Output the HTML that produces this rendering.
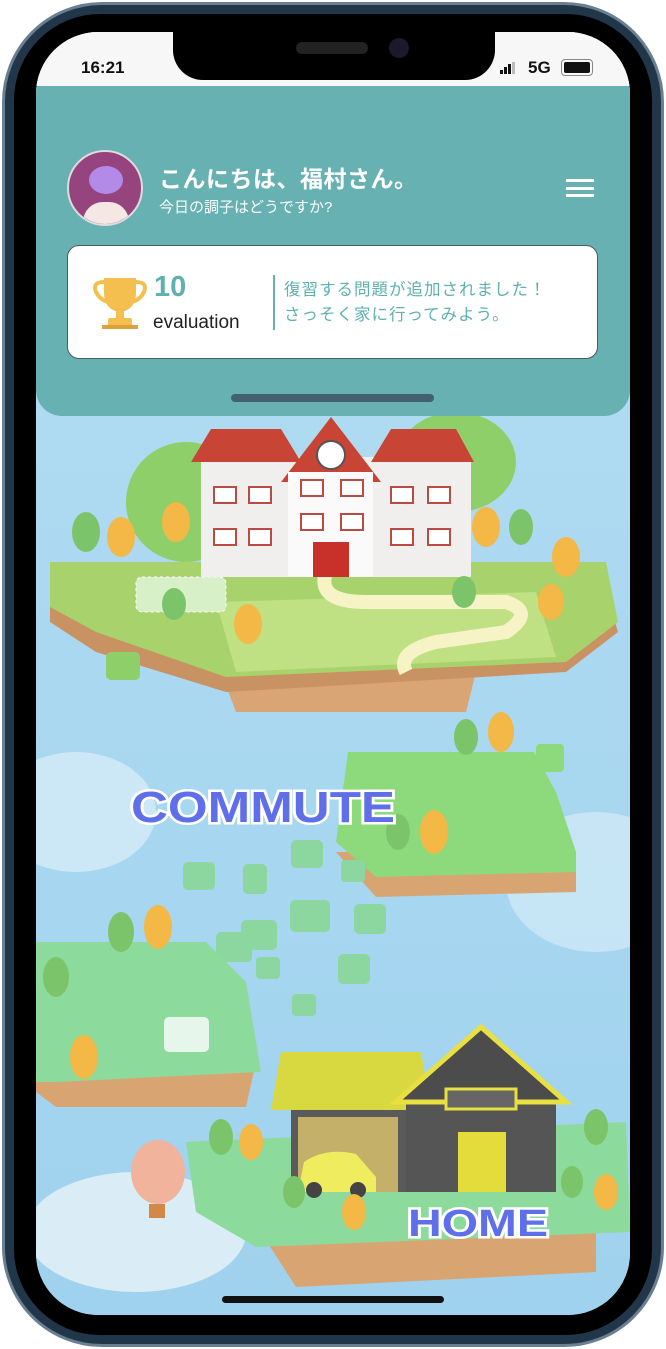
<!DOCTYPE html>
<html><head><meta charset="utf-8"><style>
*{margin:0;padding:0;box-sizing:border-box}
body{width:666px;height:1349px;background:#fff;overflow:hidden;position:relative;font-family:"Liberation Sans","Noto Sans CJK JP",sans-serif}
.frame{position:absolute;left:2px;top:2px;width:662px;height:1345px;border-radius:100px;background:#22364a;border:3px solid #6a7f92}
.bezel{position:absolute;left:14px;top:14px;width:638px;height:1321px;border-radius:86px;background:#000}
.screen{position:absolute;left:36px;top:32px;width:594px;height:1283px;border-radius:62px;overflow:hidden;background:#a9d8f0}
.status{position:absolute;left:0;top:0;width:594px;height:54px;background:#f7f7f7}
.notch{position:absolute;left:137px;top:-2px;width:322px;height:50px;background:#000;border-radius:0 0 30px 30px}
.hdr{position:absolute;left:0;top:54px;width:594px;height:330px;background:#67b1b3;border-radius:0 0 26px 26px}
.card{position:absolute;left:31px;top:159px;width:531px;height:114px;background:#fff;border:1.5px solid #4a5a66;border-radius:12px}
</style></head><body>
<div class="frame"></div>
<div class="bezel"></div>
<div class="screen">
<svg width="594" height="1283" style="position:absolute;left:0;top:0">
<defs><linearGradient id="sky" x1="0" y1="0" x2="0" y2="1"><stop offset="0" stop-color="#b5def3"/><stop offset="1" stop-color="#9fd2ee"/></linearGradient></defs>
<rect width="594" height="1283" fill="url(#sky)"/>
<ellipse cx="40" cy="780" rx="80" ry="60" fill="#dceff8" opacity=".7"/>
<ellipse cx="560" cy="850" rx="90" ry="70" fill="#dceff8" opacity=".6"/>
<ellipse cx="100" cy="1200" rx="110" ry="60" fill="#e9f4f8" opacity=".8"/>
<ellipse cx="150" cy="470" rx="60" ry="60" fill="#8fcf6a"/>
<ellipse cx="420" cy="430" rx="60" ry="50" fill="#8fcf6a"/>
<path d="M185 640 L440 640 L430 680 L200 680 Z" fill="#d9a574"/>
<path d="M14 560 L570 560 L582 600 L530 640 L190 660 L60 620 L14 590 Z" fill="#c99262"/>
<path d="M14 530 L570 530 L582 590 L530 630 L190 645 L60 600 L14 575 Z" fill="#a8d26c"/>
<path d="M180 570 L500 560 L520 625 L200 640 Z" fill="#bfe083"/>
<path d="M290 540 Q280 570 330 570 L470 570 Q500 580 470 600 L400 610 Q360 620 370 640" stroke="#f6f3c6" stroke-width="14" fill="none"/>
<rect x="100" y="545" width="90" height="35" rx="6" fill="#d8f0c8" stroke="#fff" stroke-dasharray="3 3"/>
<rect x="70" y="620" width="34" height="28" rx="5" fill="#8fcf6a"/>
<rect x="165" y="425" width="270" height="120" fill="#f1efee"/>
<polygon points="155,430 175,397 245,397 265,430" fill="#c84434"/>
<polygon points="335,430 355,397 420,397 438,430" fill="#c84434"/>
<polygon points="245,450 295,385 345,450" fill="#c84434"/>
<rect x="252" y="440" width="85" height="105" fill="#fafafa"/>
<circle cx="295" cy="423" r="14" fill="#fff" stroke="#555" stroke-width="2"/>
<rect x="277" y="510" width="36" height="35" fill="#c8312a"/>
<g fill="#fff" stroke="#b94b43" stroke-width="2">
<rect x="178" y="455" width="22" height="16"/><rect x="213" y="455" width="22" height="16"/><rect x="265" y="448" width="22" height="16"/><rect x="305" y="448" width="22" height="16"/><rect x="355" y="455" width="22" height="16"/><rect x="392" y="455" width="22" height="16"/>
<rect x="178" y="497" width="22" height="16"/><rect x="213" y="497" width="22" height="16"/><rect x="265" y="482" width="22" height="16"/><rect x="305" y="482" width="22" height="16"/><rect x="355" y="497" width="22" height="16"/><rect x="392" y="497" width="22" height="16"/>
</g>
<g fill="#f3b845"><ellipse cx="85" cy="505" rx="14" ry="20"/><ellipse cx="140" cy="490" rx="14" ry="20"/><ellipse cx="450" cy="495" rx="14" ry="20"/><ellipse cx="530" cy="525" rx="14" ry="20"/><ellipse cx="212" cy="592" rx="14" ry="20"/><ellipse cx="515" cy="570" rx="13" ry="18"/></g>
<g fill="#7cc46a"><ellipse cx="50" cy="500" rx="14" ry="20"/><ellipse cx="485" cy="495" rx="12" ry="18"/><ellipse cx="138" cy="572" rx="12" ry="16"/><ellipse cx="428" cy="560" rx="12" ry="16"/></g>
<path d="M300 820 L540 820 L540 860 L340 865 Z" fill="#d8a572"/>
<path d="M312 720 L498 720 L520 760 L540 820 L540 840 L340 845 L300 810 Z" fill="#8cda7c"/>
<rect x="500" y="712" width="28" height="28" rx="4" fill="#8cda7c"/>
<g fill="#f3b845"><ellipse cx="465" cy="700" rx="13" ry="20"/><ellipse cx="398" cy="800" rx="14" ry="22"/></g>
<g fill="#7cc46a"><ellipse cx="430" cy="705" rx="12" ry="18"/><ellipse cx="362" cy="800" rx="12" ry="18"/></g>
<g fill="#8cd6a0"><rect x="255" y="808" width="32" height="28" rx="5"/><rect x="147" y="830" width="32" height="28" rx="5"/><rect x="207" y="832" width="24" height="30" rx="5"/><rect x="305" y="828" width="24" height="22" rx="4"/><rect x="254" y="868" width="40" height="32" rx="5"/><rect x="318" y="872" width="32" height="30" rx="5"/><rect x="205" y="888" width="36" height="30" rx="5"/><rect x="180" y="900" width="36" height="30" rx="5"/><rect x="220" y="925" width="24" height="22" rx="4"/><rect x="302" y="922" width="32" height="30" rx="5"/><rect x="256" y="962" width="24" height="22" rx="4"/></g>
<path d="M0 1030 L220 1030 L210 1075 L20 1075 L0 1060 Z" fill="#d8a572"/>
<path d="M0 910 L170 910 L210 950 L225 1040 L20 1050 L0 1050 Z" fill="#8cda9c"/>
<rect x="128" y="985" width="45" height="35" rx="5" fill="#e7f6ea"/>
<g fill="#f3b845"><ellipse cx="122" cy="895" rx="14" ry="22"/><ellipse cx="48" cy="1025" rx="14" ry="22"/></g>
<g fill="#7cc46a"><ellipse cx="85" cy="900" rx="13" ry="20"/><ellipse cx="20" cy="945" rx="13" ry="20"/></g>
<path d="M215 1185 L560 1185 L560 1240 L260 1255 Z" fill="#d8a572"/>
<path d="M150 1110 L590 1090 L594 1200 L220 1215 L160 1180 Z" fill="#8cda9c"/>
<rect x="255" y="1060" width="120" height="100" fill="#5a5a5a"/>
<polygon points="235,1078 245,1020 385,1020 395,1078" fill="#d8d840"/>
<rect x="262" y="1085" width="100" height="75" fill="#c4b068"/>
<rect x="370" y="1060" width="150" height="100" fill="#555"/>
<polygon points="360,1070 445,995 530,1070" fill="#4c4c4c" stroke="#e8e040" stroke-width="5"/>
<rect x="410" y="1057" width="70" height="20" fill="#666" stroke="#e8e040" stroke-width="3"/>
<rect x="422" y="1100" width="48" height="60" fill="#e4dc3a"/>
<path d="M262 1160 L268 1130 Q290 1115 320 1122 L340 1145 L340 1160 Z" fill="#f0ec60"/>
<circle cx="278" cy="1158" r="8" fill="#444"/><circle cx="322" cy="1158" r="8" fill="#444"/>
<g fill="#f3b845"><ellipse cx="215" cy="1110" rx="12" ry="18"/><ellipse cx="318" cy="1180" rx="12" ry="18"/><ellipse cx="570" cy="1160" rx="12" ry="18"/></g>
<g fill="#7cc46a"><ellipse cx="185" cy="1105" rx="12" ry="18"/><ellipse cx="258" cy="1160" rx="11" ry="16"/><ellipse cx="560" cy="1095" rx="12" ry="18"/><ellipse cx="536" cy="1150" rx="11" ry="16"/></g>
<ellipse cx="122" cy="1140" rx="27" ry="32" fill="#f1b39b"/>
<rect x="113" y="1172" width="16" height="14" fill="#d48848"/>
<text x="95" y="790" textLength="264" lengthAdjust="spacingAndGlyphs" font-family="Liberation Sans" font-weight="900" font-size="44" fill="#5f6fea" stroke="#fff" stroke-width="5" paint-order="stroke">COMMUTE</text>
<text x="372" y="1204" textLength="140" lengthAdjust="spacingAndGlyphs" font-family="Liberation Sans" font-weight="900" font-size="38" fill="#5f6fea" stroke="#fff" stroke-width="5" paint-order="stroke">HOME</text>
</svg>
<div class="status">
<div style="position:absolute;left:45px;top:26px;font-size:17px;font-weight:bold;color:#111">16:21</div>
<div style="position:absolute;left:464px;top:30px;width:18px;height:12px">
<span style="position:absolute;left:0;bottom:0;width:3px;height:4px;background:#111"></span><span style="position:absolute;left:4px;bottom:0;width:3px;height:7px;background:#111"></span><span style="position:absolute;left:8px;bottom:0;width:3px;height:10px;background:#111"></span><span style="position:absolute;left:12px;bottom:0;width:3px;height:12px;background:#bbb"></span></div>
<div style="position:absolute;left:492px;top:26px;font-size:17px;font-weight:bold;color:#111">5G</div>
<div style="position:absolute;left:525px;top:27px;width:32px;height:17px;border:1.5px solid #888;border-radius:4px;padding:2px"><div style="width:100%;height:100%;background:#111;border-radius:2px"></div></div>
</div>
<div class="notch"><div style="position:absolute;left:123px;top:12px;width:72px;height:12px;border-radius:6px;background:#222"></div><div style="position:absolute;left:216px;top:8px;width:20px;height:20px;border-radius:50%;background:#1a1a2a"></div></div>
<div class="hdr">
<div style="position:absolute;left:31px;top:64px;width:76px;height:76px;border-radius:50%;background:#96447e;border:2px solid #ddd;overflow:hidden">
<div style="position:absolute;left:20px;top:14px;width:34px;height:28px;border-radius:50%;background:#b48ae8"></div>
<div style="position:absolute;left:14px;top:50px;width:46px;height:40px;border-radius:20px 20px 0 0;background:#f5e8e4"></div></div>
<div style="position:absolute;left:123px;top:74px;font-size:23px;font-weight:bold;color:#fff;letter-spacing:.5px">こんにちは、福村さん。</div>
<div style="position:absolute;left:123px;top:110px;font-size:15px;color:#fff">今日の調子はどうですか?</div>
<div style="position:absolute;left:530px;top:93px;width:28px;height:18px;border-top:3px solid #fff;border-bottom:3px solid #fff"><div style="margin-top:4.5px;height:3px;background:#fff"></div></div>
<div class="card">
<svg style="position:absolute;left:24px;top:30px" width="56" height="54" viewBox="0 0 56 54"><path d="M12 2 H44 V16 Q44 34 28 36 Q12 34 12 16Z" fill="#f5bf4f"/><path d="M12 6 Q0 6 4 16 Q8 24 16 26" stroke="#f5bf4f" stroke-width="4" fill="none"/><path d="M44 6 Q56 6 52 16 Q48 24 40 26" stroke="#f5bf4f" stroke-width="4" fill="none"/><rect x="24" y="34" width="8" height="8" fill="#f5bf4f"/><rect x="16" y="42" width="24" height="8" rx="2" fill="#f5bf4f"/><rect x="10" y="49" width="36" height="4" fill="#d9a03c"/></svg>
<div style="position:absolute;left:86px;top:25px;font-size:29px;font-weight:bold;color:#5fb1b0">10</div>
<div style="position:absolute;left:85px;top:66px;font-size:19px;color:#222">evaluation</div>
<div style="position:absolute;left:205px;top:29px;width:2px;height:55px;background:#67b1b3"></div>
<div style="position:absolute;left:216px;top:32px;font-size:16.5px;color:#5fb1b0;line-height:25px;letter-spacing:1px">復習する問題が追加されました！<br>さっそく家に行ってみよう。</div>
</div>
<div style="position:absolute;left:195px;top:308px;width:203px;height:8px;border-radius:4px;background:#43606e"></div>
</div>
<div style="position:absolute;left:186px;top:1264px;width:222px;height:7px;border-radius:4px;background:#111"></div>
</div>
</body></html>
